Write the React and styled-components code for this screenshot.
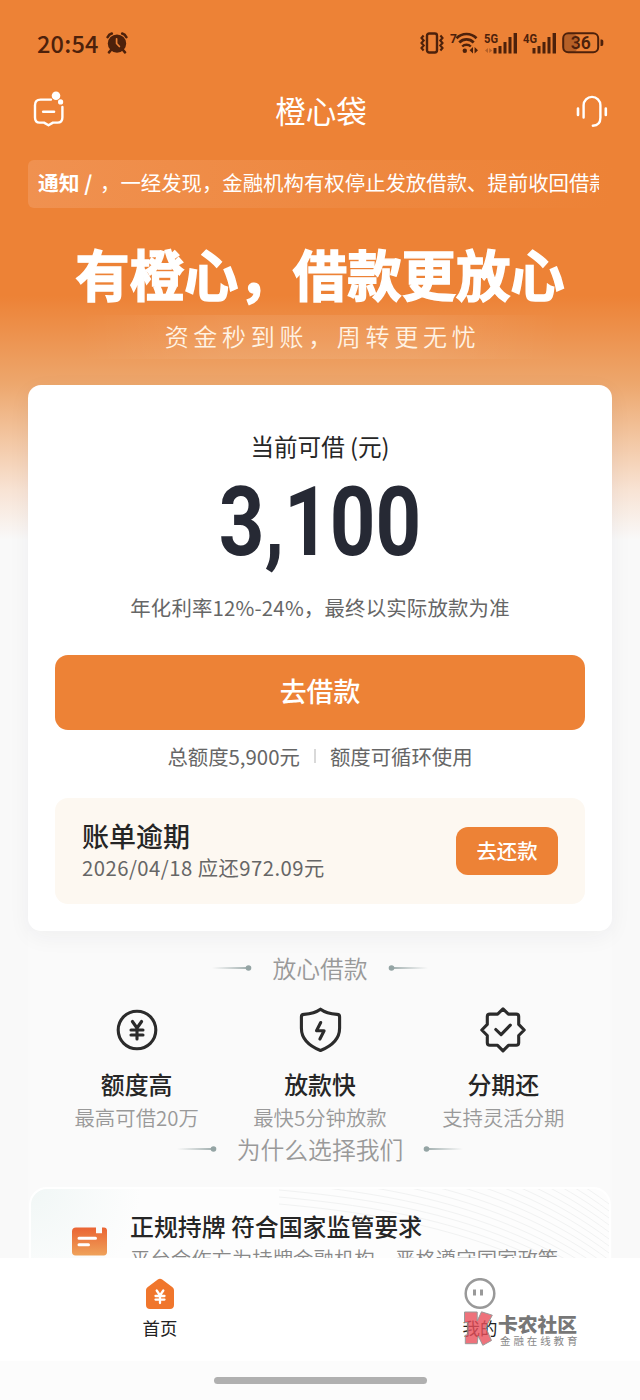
import styled, { createGlobalStyle } from "styled-components";

const GlobalStyle = createGlobalStyle`
  * {
    box-sizing: border-box;
    margin: 0;
    padding: 0;
  }

  body {
    font-family: "Noto Sans CJK SC", sans-serif;
    background-color: #fafafa;
    color: #262626;
  }

  svg {
    display: block;
    flex-shrink: 0;
  }
`;

const Screen = styled.div`
  width: 640px;
  height: 1400px;
  overflow: hidden;
  display: flex;
  flex-direction: column;
  background: linear-gradient(
      180deg,
      #ed8236 0,
      #ed8236 296px,
      #eda76d 384px,
      #f3c7a3 440px,
      #f8e3d4 490px,
      #f9f9f9 540px
    )
    no-repeat;
`;

const StatusBar = styled.div`
  height: 78px;
  padding: 8px 36px 0 37px;
  display: flex;
  align-items: center;
  justify-content: space-between;
  color: #4d210b;
`;

const StatusGroup = styled.div`
  display: flex;
  align-items: center;
  gap: ${(props) => props.$gap}px;
`;

const Clock = styled.span`
  font-size: 23.5px;
  font-weight: 500;
  line-height: 30px;
  letter-spacing: 0.2px;
`;

const Header = styled.header`
  height: 66px;
  padding: 0 32px 2px;
  display: flex;
  align-items: center;
  justify-content: space-between;
`;

const AppTitle = styled.h1`
  font-size: 30.5px;
  font-weight: 400;
  line-height: 44px;
  color: #fff;
`;

const Notice = styled.div`
  height: 48px;
  margin: 16px 28px 0;
  padding: 0 13px 5px 10px;
  display: flex;
  align-items: center;
  border-radius: 6px;
  background: linear-gradient(90deg, #f09150, #ee8840 55%, #ed8236);
  color: #fff;
  font-size: 20.4px;
  line-height: 30px;
`;

const NoticeLabel = styled.strong`
  flex-shrink: 0;
  width: 62px;
  font-size: 20.8px;
  font-weight: 700;
`;

const NoticeText = styled.p`
  flex: 1;
  overflow: hidden;
  white-space: nowrap;
`;

const Hero = styled.section`
  height: 177px;
  display: flex;
  flex-direction: column;
  align-items: center;
  padding-top: 32px;
`;

const Slogan = styled.h2`
  font-size: 54.4px;
  font-weight: 700;
  line-height: 66px;
  white-space: nowrap;
  color: #fff;
  -webkit-text-stroke: 1.4px #fff;
`;

const SubSlogan = styled.p`
  width: 480px;
  height: 44px;
  margin-top: 9px;
  padding-left: 5px;
  text-align: center;
  font-size: 24px;
  font-weight: 350;
  line-height: 42px;
  letter-spacing: 4.7px;
  color: #fff3e4;
  background: linear-gradient(
    90deg,
    transparent,
    rgba(255, 255, 255, 0.08) 30%,
    rgba(255, 255, 255, 0.08) 70%,
    transparent
  );
`;

const LoanCard = styled.section`
  position: relative;
  height: 546px;
  flex-shrink: 0;
  margin: 0 28px;
  padding: 43px 27px 0;
  display: flex;
  flex-direction: column;
  align-items: center;
  border-radius: 13px;
  background-color: #fff;
  box-shadow: 0 6px 22px rgba(30, 34, 60, 0.05);
`;

const LoanLabel = styled.p`
  font-size: 23.6px;
  line-height: 36px;
`;

const Amount = styled.p`
  height: 98px;
  margin-top: 16px;
  font-family: Roboto, sans-serif;
  font-size: 96px;
  font-weight: 700;
  line-height: 84px;
  color: #262934;
  transform: scaleX(0.83);
`;

const Rate = styled.p`
  margin-top: 13px;
  font-size: 20.4px;
  line-height: 32px;
  letter-spacing: 0.2px;
  color: #666;
`;

const BorrowButton = styled.button`
  width: 100%;
  height: 75px;
  margin-top: 32px;
  padding-bottom: 5px;
  border: none;
  border-radius: 13px;
  background-color: #ed8236;
  color: #fff;
  font-family: inherit;
  font-size: 26.9px;
  font-weight: 500;
`;

const LimitRow = styled.div`
  height: 30px;
  margin-top: 11px;
  display: flex;
  align-items: center;
  font-size: 20.4px;
  line-height: 30px;
  color: #666;
`;

const Divider = styled.span`
  width: 2px;
  height: 14px;
  margin: 0 14px;
  background-color: #d9d9d9;
`;

const BillBox = styled.div`
  width: 100%;
  height: 106px;
  margin-top: 27px;
  padding: 0 27px;
  display: flex;
  align-items: center;
  justify-content: space-between;
  border-radius: 13px;
  background-color: #fdf8f1;
`;

const BillTitle = styled.h3`
  font-size: 27px;
  font-weight: 500;
  line-height: 36px;
  margin-top: -2px;
`;

const BillInfo = styled.p`
  margin-top: -2px;
  font-size: 20.3px;
  line-height: 30px;
  letter-spacing: 0.48px;
  color: #666;
`;

const RepayButton = styled.button`
  width: 102px;
  height: 48px;
  padding-bottom: 3px;
  border: none;
  border-radius: 12px;
  background-color: #ed8236;
  color: #fff;
  font-family: inherit;
  font-size: 20.4px;
  font-weight: 500;
`;

const Section = styled.section`
  flex: 1;
  min-height: 0;
  margin: 0 28px;
  padding-top: 19px;
  overflow: hidden;
  background-color: #fafafa;
`;

const SectionTitle = styled.div`
  height: 36px;
  display: flex;
  align-items: center;
  justify-content: center;
  gap: 20px;
  font-size: 23.8px;
  font-weight: 350;
  line-height: 36px;
  color: #999;
`;

const FeatureRow = styled.div`
  height: 145px;
  padding: 19px 17px 0;
  display: grid;
  grid-template-columns: repeat(3, 1fr);
`;

const Feature = styled.div`
  display: flex;
  flex-direction: column;
  align-items: center;
`;

const FeatureName = styled.h4`
  margin-top: 11px;
  font-size: 23.9px;
  font-weight: 500;
  line-height: 36px;
`;

const FeatureText = styled.p`
  margin-top: 0;
  font-size: 20.4px;
  font-weight: 350;
  line-height: 30px;
  white-space: nowrap;
  color: #999;
`;

const ReasonCard = styled.div`
  position: relative;
  height: 120px;
  margin: 20px 1px 0;
  padding: 21px 0 0 41px;
  display: flex;
  gap: 23px;
  border: 2px solid #fff;
  border-radius: 18px;
  background: radial-gradient(circle at 0 0, #f1f7f6, #fdfdfd 110px);
`;

const Waves = styled.svg`
  position: absolute;
  top: 0;
  right: 0;
`;

const ReasonBody = styled.div`
  position: relative;
`;

const ReasonTitle = styled.h4`
  font-size: 23.9px;
  font-weight: 500;
  line-height: 34px;
  margin-top: -1px;
`;

const ReasonText = styled.p`
  font-size: 20.4px;
  font-weight: 350;
  line-height: 30px;
  white-space: nowrap;
  color: #888;
`;

const LicenseSvg = styled.svg`
  margin-top: 17px;
`;

const TabBar = styled.nav`
  position: relative;
  height: 103px;
  flex-shrink: 0;
  display: grid;
  grid-template-columns: 1fr 1fr;
  background-color: #fff;
`;

const Tab = styled.div`
  display: flex;
  flex-direction: column;
  align-items: center;
  padding-top: 20px;
  font-size: 17.4px;
  line-height: 26px;
  color: #222;
`;

const TabLabel = styled.span`
  margin-top: 5px;
`;

const Watermark = styled.div`
  position: absolute;
  left: 463px;
  top: 53px;
  display: flex;
  gap: 4px;
`;

const WatermarkName = styled.p`
  font-size: 19.8px;
  font-weight: 900;
  line-height: 24px;
  margin-top: 1px;
  color: #777;
`;

const WatermarkNote = styled.p`
  font-size: 10.5px;
  line-height: 15px;
  letter-spacing: 2.9px;
  margin: -3px 0 0 2px;
  white-space: nowrap;
  color: #888;
`;

const HomeIndicator = styled.div`
  height: 39px;
  flex-shrink: 0;
  padding-top: 16px;
  background-color: #fcfcfc;

  &::before {
    content: "";
    display: block;
    width: 213px;
    height: 7px;
    margin: 0 auto;
    border-radius: 4px;
    background-color: #b0b0b0;
  }
`;

const Bars = styled.svg`
  fill: currentColor;
  font-family: Roboto, sans-serif;
  font-weight: 700;
`;

function AlarmIcon() {
  return (
    <svg width="22" height="22" viewBox="0 0 22 22" fill="currentColor">
      <circle cx="11" cy="11.6" r="9.2" />
      <path
        d="M1.600 5.200C2.500 3.300 3.800 2.100 5.800 1.500M20.400 5.200c-.9-1.900-2.200-3.100-4.200-3.700M5 18l-2 2.300M17 18l2 2.300"
        fill="none"
        stroke="currentColor"
        strokeWidth="2.600"
        strokeLinecap="round"
      />
      <path
        d="M10.600 6.800v4.700l2.800 3"
        stroke="#ed8236"
        strokeWidth="1.700"
        fill="none"
        strokeLinecap="round"
      />
    </svg>
  );
}

function VibrateIcon() {
  return (
    <svg
      width="26"
      height="22"
      viewBox="0 0 26 22"
      fill="none"
      stroke="currentColor"
      strokeWidth="2.1"
    >
      <rect x="8" y="1.5" width="10" height="19" rx="2.2" strokeWidth="2.4" />
      <path d="M4.6 3.5 2.5 6l2.2 2.5L2.5 11l2.2 2.5L2.5 16l2.1 2.5M21.4 3.5 23.5 6l-2.2 2.5 2.2 2.5-2.2 2.5 2.2 2.5-2.1 2.5" />
    </svg>
  );
}

function WifiIcon() {
  return (
    <Bars width="29" height="24" viewBox="0 0 29 24">
      <text x="0" y="11.500" fontSize="12">
        7
      </text>
      <g fill="none" stroke="currentColor" strokeWidth="2.7">
        <path d="M6.500 7.200a14 14 0 0 1 20 0" />
        <path d="M9.300 11.500a10 10 0 0 1 14.400 0" />
        <path d="M12.200 15.500a6 6 0 0 1 8.600 0" strokeWidth="2.4" />
      </g>
      <circle cx="14.800" cy="19.800" r="2.2" />
      <path d="M23 16v6.500l-3.400-3.200zM24.600 16v6.500l3.400-3.200z" />
    </Bars>
  );
}

function SignalIcon({ label, arrows }) {
  return (
    <Bars width="34" height="24" viewBox="0 0 34 24">
      <text x="0" y="11.500" fontSize="12" textLength="14" lengthAdjust="spacingAndGlyphs">
        {label}
      </text>
      <path d="M9.500 17h3v5.500h-3zM14.500 15h3v7.500h-3zM19.500 11h3v11.500h-3zM24.500 6h3v16.500h-3zM29.600 2h3.400v20.500h-3.400z" />
      {arrows && <path d="M4 17v5l-3-2.500zM5.200 17v5l3-2.500z" opacity="0.35" />}
    </Bars>
  );
}

function BatteryIcon() {
  return (
    <Bars width="42" height="22" viewBox="0 0 42 22">
      <rect x="2" y="2" width="13" height="18" rx="4" opacity="0.35" />
      <rect
        x="1.2"
        y="1.2"
        width="35"
        height="19"
        rx="5"
        fill="none"
        stroke="currentColor"
        strokeWidth="2"
      />
      <path d="M38.5 7.5h1.2c1 0 1.600.9 1.600 2v2.500c0 1.100-.6 2-1.600 2h-1.200z" />
      <text x="18.700" y="17" fontSize="17.500" fontWeight="600" textAnchor="middle">
        36
      </text>
    </Bars>
  );
}

function MessageIcon() {
  return (
    <svg
      width="34"
      height="38"
      viewBox="0 0 34 38"
      fill="none"
      stroke="#fff"
      strokeWidth="2.4"
      strokeLinecap="round"
      strokeLinejoin="round"
    >
      <path d="M19 8.600H8.500c-4 0-5.500 2-5.500 5.600v12.200c0 3.500 1.600 5.200 4.600 5.200H12l4.500 2.600 4.500-2.600h4.400c3.400 0 5-1.800 5-5.200V16" />
      <path d="M11.200 20.800h10.800" strokeWidth="2.600" />
      <circle cx="24" cy="4.800" r="4.300" fill="#fff" stroke="none" />
      <circle cx="28.600" cy="10.900" r="2.600" fill="#fff" stroke="none" />
    </svg>
  );
}

function ServiceIcon() {
  return (
    <svg
      width="32"
      height="34"
      viewBox="0 0 32 34"
      fill="none"
      stroke="#fff"
      strokeWidth="2.4"
      strokeLinecap="round"
    >
      <path d="M7.600 24.500V12.300a8.400 8.400 0 0 1 16.800 0v12.500c0 5-2.800 7.700-7.600 7.900" />
      <path d="M2 15.500v6.500M29.800 15.500v6.500" strokeWidth="2.600" />
    </svg>
  );
}

function TitleLine({ flip }) {
  return (
    <svg width="40" height="8" viewBox="0 0 40 8" transform={flip ? "scale(-1 1)" : undefined}>
      <defs>
        <linearGradient id="fade" x1="0" x2="1" y1="0" y2="0">
          <stop offset="0" stopColor="#96a5a5" stopOpacity="0" />
          <stop offset="1" stopColor="#8b9c9c" />
        </linearGradient>
      </defs>
      <rect x="0" y="3.2" width="36" height="1.6" fill="url(#fade)" />
      <circle cx="36.5" cy="4" r="2.8" fill="#94a4a4" />
    </svg>
  );
}

const featureIcons = {
  yuan: (
    <>
      <circle cx="25" cy="25" r="18.800" />
      <path d="m20.400 16.500 4.600 6.500 4.600-6.500M25 23v11M19 25h12M19 30h12" />
    </>
  ),
  shield: (
    <>
      <path d="M25.500 4.200c4 3 9.500 4.700 16.500 5.200 1.700.1 2.600 1 2.600 2.400v11.400c0 10-6.100 17-19.100 22.300C12.500 40.200 6.400 33.200 6.400 23.200V11.800c0-1.400.9-2.300 2.600-2.400 7-.5 12.500-2.200 16.500-5.200z" />
      <path d="m25.700 17.500-4.200 8.200h7.600l-4.200 8.300" />
    </>
  ),
  badge: (
    <>
      <path d="M25 3.800l5.400 5.300h7.800c1.600 0 2.500.9 2.500 2.500v7.800L46.200 25l-5.500 5.500v7.300c0 1.600-.9 2.500-2.500 2.500h-7.800L25 45.800l-5.400-5.500h-7.800c-1.600 0-2.500-.9-2.500-2.500v-7.300L3.800 25l5.500-5.600v-7.800c0-1.600.9-2.500 2.500-2.500h7.800z" />
      <path d="m17.800 24.500 5.300 5.200 9.200-9.500" />
    </>
  ),
};

function FeatureIcon({ name }) {
  return (
    <svg
      width="50"
      height="50"
      viewBox="0 0 50 50"
      fill="none"
      stroke="#2b2b2b"
      strokeWidth="3.100"
      strokeLinecap="round"
      strokeLinejoin="round"
    >
      {featureIcons[name]}
    </svg>
  );
}

function LicenseIcon() {
  return (
    <LicenseSvg width="35" height="29" viewBox="0 0 35 29">
      <defs>
        <linearGradient id="license" x1="0" x2="0" y1="0" y2="1">
          <stop offset="0" stopColor="#ea6433" />
          <stop offset="1" stopColor="#efa25a" />
        </linearGradient>
      </defs>
      <path
        d="M4 .5h20v5.800h6V.5h2c1.800 0 3 1.300 3 3v21.500c0 2-1.200 3.500-3.200 3.500H3.500C1.300 28.500 0 27.200 0 25V4.500C0 2 1.500.5 4 .5z"
        fill="url(#license)"
      />
      <path d="M7 11.200h16.500M7 17.800h9.500" stroke="#fff" strokeWidth="3" strokeLinecap="round" />
    </LicenseSvg>
  );
}

function HomeIcon() {
  return (
    <svg width="32" height="32" viewBox="0 0 32 32">
      <path
        d="M13.800 1.500c1.300-.9 3.100-.9 4.400 0l10 7.500c1.200.9 1.800 2 1.800 3.500v14.500c0 2.500-1.500 4-4 4H6c-2.500 0-4-1.500-4-4V12.500c0-1.500.6-2.600 1.800-3.500z"
        fill="#f0762c"
      />
      <path
        d="m12.700 12.500 3.300 5 3.300-5M16 17v8M11.500 18h9M11.500 21.600h9"
        fill="none"
        stroke="#fff"
        strokeWidth="2.300"
        strokeLinecap="round"
      />
    </svg>
  );
}

function MineIcon() {
  return (
    <svg width="32" height="32" viewBox="0 0 32 32" fill="none" stroke="#999">
      <circle cx="16" cy="15.500" r="14.300" strokeWidth="2.500" />
      <path d="M10.500 11.500v6M17.500 11.500v6" strokeWidth="3" />
    </svg>
  );
}

function WatermarkLogo() {
  return (
    <svg width="31" height="36" viewBox="0 0 31 36">
      <path
        d="M1.500 1h12.700v9L18.500.8l10.800 3.400-6.600 12.200L28.500 29.500l-8.700 4.800-4.600-9.300-1 7.700H2.300v-8.500l2.500-.5V11.500H1.500z"
        fill="#ea4f5a"
        fillOpacity="0.8"
        stroke="#999"
        strokeWidth="1"
      />
    </svg>
  );
}

const features = [
  { icon: "yuan", name: "额度高", text: "最高可借20万" },
  { icon: "shield", name: "放款快", text: "最快5分钟放款" },
  { icon: "badge", name: "分期还", text: "支持灵活分期" },
];

const waveOffsets = Array.from({ length: 16 }, (_, i) => i * 7);

function App() {
  return (
    <>
      <GlobalStyle />
      <Screen>
        <StatusBar>
          <StatusGroup $gap={7}>
            <Clock>20:54</Clock>
            <AlarmIcon />
          </StatusGroup>
          <StatusGroup $gap={5}>
            <VibrateIcon />
            <WifiIcon />
            <SignalIcon label="5G" arrows />
            <SignalIcon label="4G" />
            <BatteryIcon />
          </StatusGroup>
        </StatusBar>

        <Header>
          <MessageIcon />
          <AppTitle>橙心袋</AppTitle>
          <ServiceIcon />
        </Header>

        <Notice>
          <NoticeLabel>通知 /</NoticeLabel>
          <NoticeText>，一经发现，金融机构有权停止发放借款、提前收回借款</NoticeText>
        </Notice>

        <Hero>
          <Slogan>有橙心，借款更放心</Slogan>
          <SubSlogan>资金秒到账，周转更无忧</SubSlogan>
        </Hero>

        <LoanCard>
          <LoanLabel>当前可借 (元)</LoanLabel>
          <Amount>3,100</Amount>
          <Rate>年化利率12%-24%，最终以实际放款为准</Rate>
          <BorrowButton>去借款</BorrowButton>
          <LimitRow>
            <span>总额度5,900元</span>
            <Divider />
            <span>额度可循环使用</span>
          </LimitRow>
          <BillBox>
            <div>
              <BillTitle>账单逾期</BillTitle>
              <BillInfo>2026/04/18 应还972.09元</BillInfo>
            </div>
            <RepayButton>去还款</RepayButton>
          </BillBox>
        </LoanCard>

        <Section>
          <SectionTitle>
            <TitleLine />
            放心借款
            <TitleLine flip />
          </SectionTitle>
          <FeatureRow>
            {features.map((item) => (
              <Feature key={item.icon}>
                <FeatureIcon name={item.icon} />
                <FeatureName>{item.name}</FeatureName>
                <FeatureText>{item.text}</FeatureText>
              </Feature>
            ))}
          </FeatureRow>
          <SectionTitle>
            <TitleLine />
            为什么选择我们
            <TitleLine flip />
          </SectionTitle>
          <ReasonCard>
            <Waves width="330" height="116" viewBox="0 0 330 116" fill="none" stroke="#f1f2f2">
              {waveOffsets.map((y) => (
                <path key={y} d={`M0 ${y - 90}C110 ${y - 80} 230 ${y - 60} 330 ${y + 15}`} />
              ))}
            </Waves>
            <LicenseIcon />
            <ReasonBody>
              <ReasonTitle>正规持牌 符合国家监管要求</ReasonTitle>
              <ReasonText>平台合作方为持牌金融机构，严格遵守国家政策</ReasonText>
            </ReasonBody>
          </ReasonCard>
        </Section>

        <TabBar>
          <Tab>
            <HomeIcon />
            <TabLabel>首页</TabLabel>
          </Tab>
          <Tab>
            <MineIcon />
            <TabLabel>我的</TabLabel>
          </Tab>
          <Watermark>
            <WatermarkLogo />
            <div>
              <WatermarkName>卡农社区</WatermarkName>
              <WatermarkNote>金融在线教育</WatermarkNote>
            </div>
          </Watermark>
        </TabBar>
        <HomeIndicator />
      </Screen>
    </>
  );
}

export default App;
